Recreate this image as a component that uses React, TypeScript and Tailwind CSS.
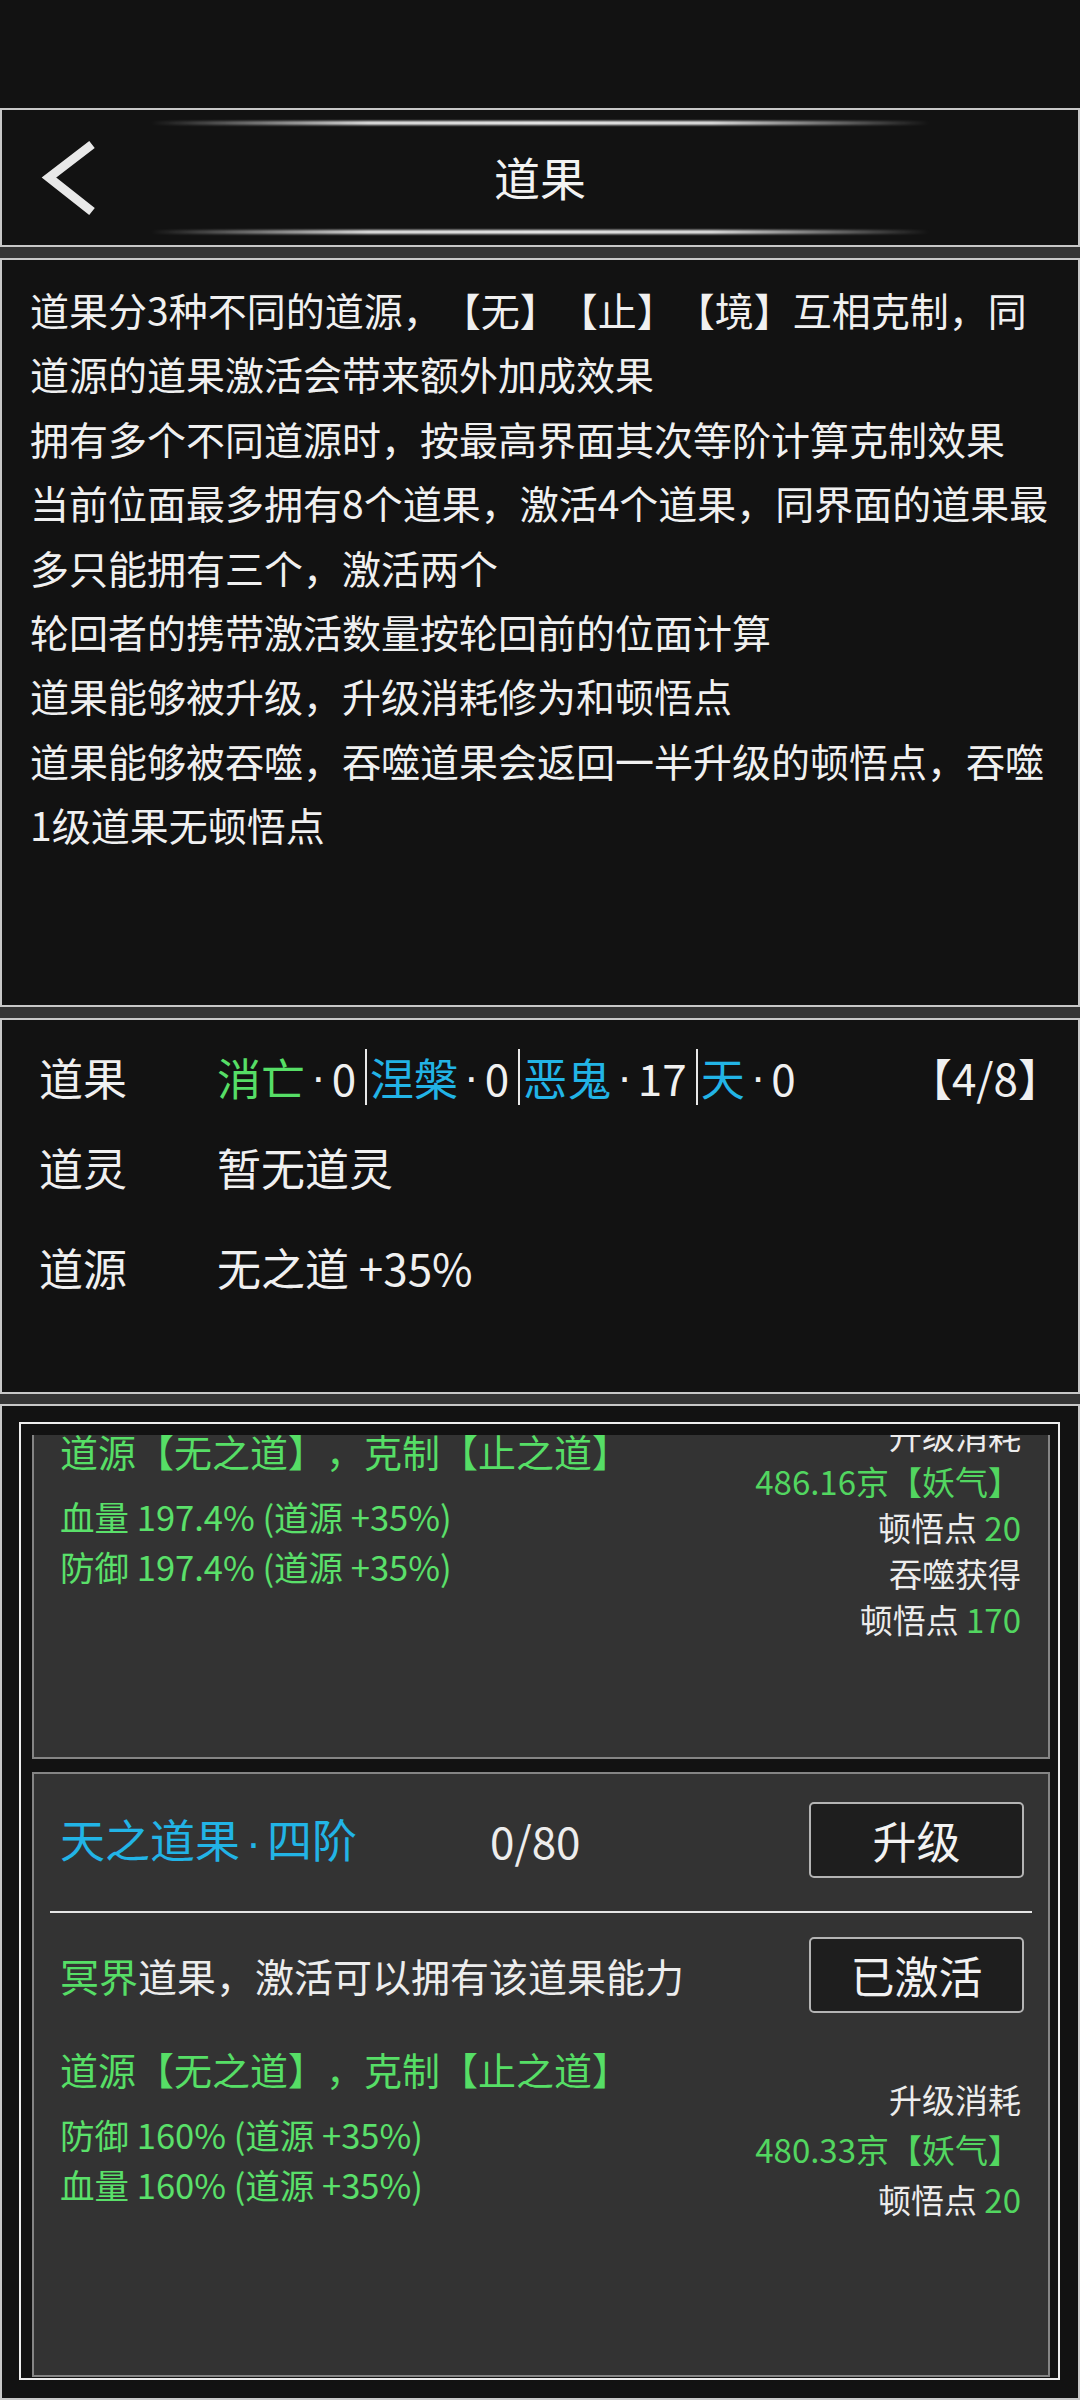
import React from 'react';

const rules = [
  '道果分3种不同的道源，【无】【止】【境】互相克制，同',
  '道源的道果激活会带来额外加成效果',
  '拥有多个不同道源时，按最高界面其次等阶计算克制效果',
  '当前位面最多拥有8个道果，激活4个道果，同界面的道果最',
  '多只能拥有三个，激活两个',
  '轮回者的携带激活数量按轮回前的位面计算',
  '道果能够被升级，升级消耗修为和顿悟点',
  '道果能够被吞噬，吞噬道果会返回一半升级的顿悟点，吞噬',
  '1级道果无顿悟点',
];

interface CostLine {
  label: string;
  value?: string;
  green?: boolean;
}

interface FruitCardProps {
  name?: string;
  progress?: string;
  stats: string[];
  costs: CostLine[];
  costClass: string;
  // the list is scrolled: only the lower part of this card is still in view
  scrolledPast?: boolean;
}

const GlowLine: React.FC = () => (
  <div className="h-[4px] w-[780px] bg-[linear-gradient(90deg,transparent_0%,#e6e6e6_28%,#f4f4f4_50%,#e6e6e6_72%,transparent_100%)] blur-[1px]" />
);

const Divider: React.FC = () => (
  <span className="ml-[9px] mr-[3px] inline-block h-[56px] w-[2px] bg-[#e8e8e8]" />
);

// narrow middle dot, the CJK font draws it full width
const Dot: React.FC<{ className?: string }> = ({ className = 'mx-[6px]' }) => (
  <span className={`font-['Liberation_Sans',sans-serif] ${className}`}>·</span>
);

const FruitCard: React.FC<FruitCardProps> = ({ name, progress, stats, costs, costClass, scrolledPast = false }) => {
  return (
    <div
      className={
        scrolledPast
          ? '-mt-[8px] h-[332px] shrink-0 border-2 border-[#858585] bg-[#333333]'
          : 'h-[605px] shrink-0 border-2 border-[#858585] bg-[#333333] pt-[28px]'
      }
    >
      {!scrolledPast && (
        <>
          <div className="flex h-[76px] items-center pl-[26px] pr-[24px]">
            <span className="w-[430px] text-[45px] leading-none text-[#22b4e6]">
              {name}
              <Dot className="mx-[6px]" />
              四阶
            </span>
            <span className="text-[44px] leading-none text-[#ededed]">{progress}</span>
            <button className="ml-auto h-[76px] w-[215px] rounded-[5px] border-2 border-[#b4b4b4] bg-[#1e1e1e] text-[44px] leading-none text-[#f2f2f2]">
              升级
            </button>
          </div>

          <div className="mx-[16px] mt-[33px] h-[2px] bg-[#e6e6e6]" />

          <div className="mt-[24px] flex h-[76px] items-center pl-[26px] pr-[24px]">
            <p className="text-[39px] leading-none text-[#ededed]">
              <span className="text-[#56de66]">冥界</span>道果，激活可以拥有该道果能力
            </p>
            <button className="ml-auto h-[76px] w-[215px] rounded-[5px] border-2 border-[#b4b4b4] bg-[#1e1e1e] text-[44px] leading-none text-[#f2f2f2]">
              已激活
            </button>
          </div>
        </>
      )}

      <div className={`flex h-[208px] items-center pl-[26px] pr-[27px] ${scrolledPast ? '' : 'mt-[34px]'}`}>
        <div className="-mt-[3px] self-start">
          <p className="text-[38px] leading-[50px] text-[#56de66]">道源【无之道】，克制【止之道】</p>
          <div className="mt-[15px] text-[34.5px] leading-[50px] text-[#5ae06a]">
            {stats.map(s => (
              <p key={s}>{s}</p>
            ))}
          </div>
        </div>
        <div className={`ml-auto text-right text-[33px] text-[#ececec] ${costClass}`}>
          {costs.map((c, i) => (
            <p key={i} className={c.green ? 'text-[#52d660]' : ''}>
              {c.label}
              {c.value && <span className="text-[#52d660]"> {c.value}</span>}
            </p>
          ))}
        </div>
      </div>
    </div>
  );
};

const App: React.FC = () => {
  return (
    <div className="flex h-[2400px] w-[1080px] flex-col overflow-hidden bg-[#353535] font-['Noto_Sans_CJK_SC','Noto_Sans',sans-serif] text-[#f0f0f0] [text-spacing-trim:space-all]">
      {/* status bar */}
      <div className="h-[108px] shrink-0 bg-[#121212]" />

      {/* title bar */}
      <header className="flex h-[139px] shrink-0 flex-col items-center border-2 border-[#c8c8c8] bg-[#121212] pt-[11px]">
        <GlowLine />
        <div className="grid h-[105px] w-full grid-cols-[1fr_auto_1fr] items-center">
          <div className="pl-[38px]">
            <svg width="56" height="84" viewBox="0 0 56 84" fill="none">
              <path d="M52 8.5 L9 41.5 L52 75.5" stroke="#e8e8e8" strokeWidth="9" strokeLinejoin="miter" />
            </svg>
          </div>
          <h1 className="mb-[4px] text-[46px] leading-none text-[#f2f2f2]">道果</h1>
          <div />
        </div>
        <GlowLine />
      </header>

      {/* rules */}
      <section className="mt-[11px] h-[749px] shrink-0 border-2 border-[#c8c8c8] bg-[#121212] pl-[28px] pt-[17px] text-[39px] leading-[64.4px] text-[#f0f0f0]">
        {rules.map(line => (
          <p key={line} className="whitespace-nowrap">
            {line}
          </p>
        ))}
      </section>

      {/* summary */}
      <section className="mt-[11px] h-[376px] shrink-0 border-2 border-[#c8c8c8] bg-[#121212] pl-[37px] pr-[16px] pt-[27px] text-[44px] text-[#f0f0f0]">
        <div className="flex h-[60px] items-center">
          <span className="w-[178px]">道果</span>
          <span className="text-[#56de66]">消亡</span>
          <Dot />
          <span>0</span>
          <Divider />
          <span className="text-[#22b4e6]">涅槃</span>
          <Dot />
          <span>0</span>
          <Divider />
          <span className="text-[#22b4e6]">恶鬼</span>
          <Dot />
          <span>17</span>
          <Divider />
          <span className="text-[#22b4e6]">天</span>
          <Dot />
          <span>0</span>
          <span className="ml-auto">【4/8】</span>
        </div>
        <div className="mt-[30px] flex h-[60px] items-center">
          <span className="w-[178px]">道灵</span>
          <span>暂无道灵</span>
        </div>
        <div className="mt-[40px] flex h-[60px] items-center">
          <span className="w-[178px]">道源</span>
          <span>无之道 +35%</span>
        </div>
      </section>

      {/* fruit list, scrolled part way down */}
      <section className="mt-[10px] h-[996px] shrink-0 border-2 border-[#c8c8c8] bg-[#121212] pb-[18px] pl-[17px] pr-[18px] pt-[16px]">
        <div className="h-full border-2 border-[#eeeeee] pl-[11px] pr-[8px] pt-[11px]">
          <div className="flex h-full flex-col gap-[13px] overflow-hidden">
            <FruitCard
              scrolledPast
              stats={['血量 197.4% (道源 +35%)', '防御 197.4% (道源 +35%)']}
              costClass="leading-[46px] mb-[12px]"
              costs={[
                { label: '升级消耗' },
                { label: '486.16京【妖气】', green: true },
                { label: '顿悟点', value: '20' },
                { label: '吞噬获得' },
                { label: '顿悟点', value: '170' },
              ]}
            />
            <FruitCard
              name="天之道果"
              progress="0/80"
              stats={['防御 160% (道源 +35%)', '血量 160% (道源 +35%)']}
              costClass="leading-[50px] mb-[4px]"
              costs={[
                { label: '升级消耗' },
                { label: '480.33京【妖气】', green: true },
                { label: '顿悟点', value: '20' },
              ]}
            />
          </div>
        </div>
      </section>
    </div>
  );
};

export default App;
